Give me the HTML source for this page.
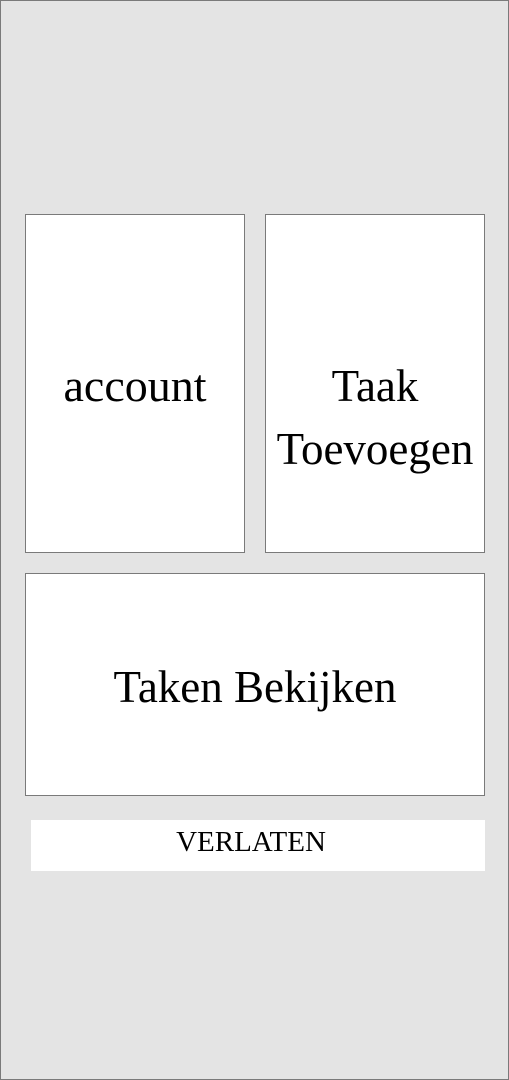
<!DOCTYPE html>
<html><head><style>
html,body{margin:0;padding:0}
body{width:509px;height:1080px;position:relative;background:#e4e4e4;font-family:"Liberation Serif",serif;color:#000;overflow:hidden}
.frame{position:absolute;left:0;top:0;width:507px;height:1078px;border:1px solid #7a7a7a}
.box{position:absolute;background:#fff;border:1px solid #7a7a7a;box-sizing:border-box;display:flex;align-items:center;justify-content:center;text-align:center;font-size:46px}
</style></head><body>
<div class="frame"></div>
<div class="box" style="left:25px;top:214px;width:220px;height:339px;padding-top:4px">account</div>
<div class="box" style="left:265px;top:214px;width:220px;height:339px;line-height:63px;padding-top:68px;font-size:45px">Taak<br>Toevoegen</div>
<div class="box" style="left:25px;top:573px;width:460px;height:223px;padding-top:4px;font-size:45px">Taken Bekijken</div>
<div style="position:absolute;left:31px;top:820px;width:454px;height:51px;background:#fff;text-align:center;font-size:29px;line-height:44px;text-indent:-14px">VERLATEN</div>
</body></html>
